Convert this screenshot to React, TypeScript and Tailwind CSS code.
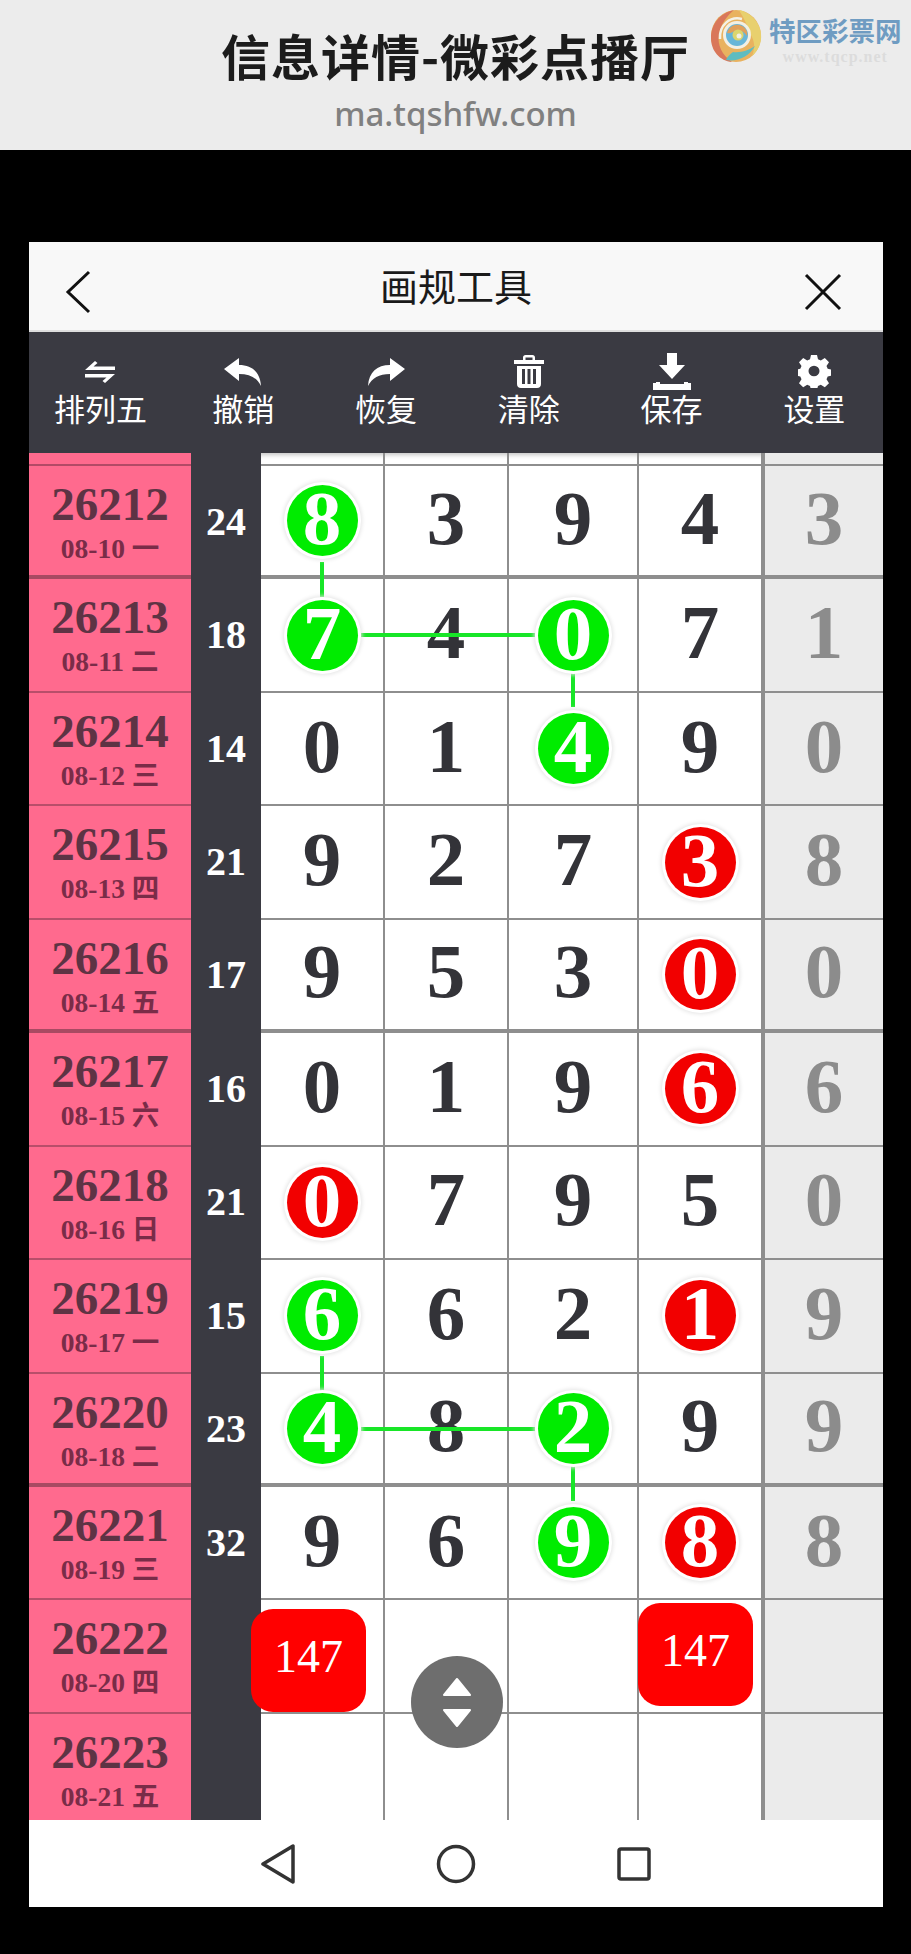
const SERIF = "font-['Liberation_Serif','Noto_Sans_CJK_SC',serif]";
const SANS = "font-['Noto_Sans_CJK_SC','Noto_Sans',sans-serif]";

type Mark = "green" | "red" | null;

type Row = {
  issue: string;
  date: string;
  sum: string;
  nums: [string, string, string, string];
  last: string;
  marks?: Mark[];
};

const rows: Row[] = [
  { issue: "26212", date: "08-10 一", sum: "24", nums: ["8", "3", "9", "4"], last: "3", marks: ["green", null, null, null] },
  { issue: "26213", date: "08-11 二", sum: "18", nums: ["7", "4", "0", "7"], last: "1", marks: ["green", null, "green", null] },
  { issue: "26214", date: "08-12 三", sum: "14", nums: ["0", "1", "4", "9"], last: "0", marks: [null, null, "green", null] },
  { issue: "26215", date: "08-13 四", sum: "21", nums: ["9", "2", "7", "3"], last: "8", marks: [null, null, null, "red"] },
  { issue: "26216", date: "08-14 五", sum: "17", nums: ["9", "5", "3", "0"], last: "0", marks: [null, null, null, "red"] },
  { issue: "26217", date: "08-15 六", sum: "16", nums: ["0", "1", "9", "6"], last: "6", marks: [null, null, null, "red"] },
  { issue: "26218", date: "08-16 日", sum: "21", nums: ["0", "7", "9", "5"], last: "0", marks: ["red", null, null, null] },
  { issue: "26219", date: "08-17 一", sum: "15", nums: ["6", "6", "2", "1"], last: "9", marks: ["green", null, null, "red"] },
  { issue: "26220", date: "08-18 二", sum: "23", nums: ["4", "8", "2", "9"], last: "9", marks: ["green", null, "green", null] },
  { issue: "26221", date: "08-19 三", sum: "32", nums: ["9", "6", "9", "8"], last: "8", marks: [null, null, "green", "red"] },
  { issue: "26222", date: "08-20 四", sum: "", nums: ["", "", "", ""], last: "" },
  { issue: "26223", date: "08-21 五", sum: "", nums: ["", "", "", ""], last: "" },
];

// rows that end with the heavier separator
const heavy = [0, 4, 8];

function Swirl() {
  return (
    <svg width="52" height="54" viewBox="0 0 52 54" fill="none" className="shrink-0">
      <ellipse cx="26" cy="27" rx="25" ry="26" fill="#e9b25f" />
      <path d="M24 1C10 4 1 15 1 29c0 13 9 23 21 24C12 46 7 36 9 25 11 14 18 6 24 1Z" fill="#d9775a" />
      <path d="M29 1c11 2 21 12 22 24 1 9-3 17-9 22 3-7 3-14-1-21C37 15 33 8 29 1Z" fill="#e8d06e" />
      <path d="M16 51c11 2 23-3 29-14-6 4-14 7-22 6-3 2-6 5-7 8Z" fill="#5fbcc0" />
      <path d="M10 30C9 16 20 7 32 10" stroke="#f4f1e6" strokeWidth="2.5" />
      <circle cx="27" cy="26" r="14" fill="#f2efe4" />
      <circle cx="27" cy="26" r="11" fill="#68b6d8" />
      <path d="M17 24c2-7 9-10 15-7 4 2 6 6 5 10-3-5-8-7-12-5-3 1-5 3-8 2Z" fill="#e0a05c" />
      <circle cx="28" cy="26" r="5.5" fill="#dcd56e" />
      <circle cx="29" cy="27" r="2.5" fill="#f2efe4" />
    </svg>
  );
}

function SwapIcon() {
  return (
    <svg width="32" height="24" viewBox="0 0 32 24" fill="white">
      <path d="M1 10 11 1l2.5 2L9.5 6.5H31V10Z" />
      <path d="M31 14 21 23l-2.500-2 4-3.500H1V14Z" />
    </svg>
  );
}

function ReplyIcon({ flip }: { flip?: boolean }) {
  return (
    <svg width="38" height="28" viewBox="0 0 38 28" fill="white" className={flip ? "-scale-x-100" : ""}>
      <path d="M0 11 15 0v7c13 0 21 7 22 21-4-8-11-12-22-12v7Z" />
    </svg>
  );
}

function TrashIcon() {
  return (
    <svg width="30" height="33" viewBox="0 0 30 33" fill="white">
      <path d="M9 5V2.500C9 1 10 0 11.500 0h7C20 0 21 1 21 2.500V5h9v4H0V5Zm2.500 0h7V2.500h-7Z" />
      <path fillRule="evenodd" d="M3 11h24v18c0 2.500-1.500 4-4 4H7c-2.500 0-4-1.500-4-4ZM8 14v15h3V14Zm5.500 0v15h3V14ZM19 14v15h3V14Z" />
    </svg>
  );
}

function SaveIcon() {
  return (
    <svg width="38" height="37" viewBox="0 0 38 37" fill="white">
      <path d="M14 0h10v12h8L19 26 6 12h8Z" />
      <path d="M0 30h3v-1h4v2h24v-2h4v1h3v7H0Z" />
    </svg>
  );
}

function GearIcon() {
  return (
    <svg width="33" height="33" viewBox="0 0 33 33" fill="white">
      <path
        fillRule="evenodd"
        d="M13.500 0h6l1 4.500 2.800 1.200 4-2.500 4.200 4.200-2.500 4 1.200 2.800 4.300 1v6l-4.300 1-1.200 2.800 2.500 4-4.200 4.200-4-2.500-2.800 1.200-1 4.100h-6l-1-4.100-2.800-1.200-4 2.500-4.200-4.200 2.500-4-1.200-2.800-4.300-1v-6l4.300-1 1.200-2.800-2.500-4 4.200-4.200 4 2.500 2.800-1.200ZM16.500 11a5.500 5.500 0 1 0 0 11 5.500 5.500 0 0 0 0-11Z"
        transform="translate(-0.5 0) scale(1 0.97)"
      />
    </svg>
  );
}

const tools = [
  { label: "排列五", icon: <SwapIcon /> },
  { label: "撤销", icon: <ReplyIcon /> },
  { label: "恢复", icon: <ReplyIcon flip /> },
  { label: "清除", icon: <TrashIcon /> },
  { label: "保存", icon: <SaveIcon /> },
  { label: "设置", icon: <GearIcon /> },
];

function Digit({ value, mark, muted }: { value: string; mark?: Mark; muted?: boolean }) {
  if (mark) {
    return (
      <span className={`z-10 flex h-[71px] w-[71px] items-center justify-center rounded-full text-white shadow-[0_0_0_3px_#fff,0_0_4px_4px_#e4e4e4] ${mark === "green" ? "bg-[#00ec00]" : "bg-[#f20000]"}`}>
        <span className="pb-[4px]">{value}</span>
      </span>
    );
  }
  return <span className={`pb-[5px] ${muted ? "text-[#8c8c8c]" : "text-[#333338]"}`}>{value}</span>;
}

const cols = "grid grid-cols-[124px_124px_130px_126px_118px]";

export default function App() {
  return (
    <div className="h-[1954px] w-[911px] overflow-hidden bg-black">
      <header className={`relative h-[150px] bg-[#ececec] text-center ${SANS}`}>
        <h1 className="pt-[20px] text-[49px] leading-[70px] font-bold tracking-[1px] text-[#1c1c1c]">信息详情-微彩点播厅</h1>
        <p className="pt-[2px] text-[33px] leading-[44px] font-['Noto_Sans',sans-serif] font-medium text-[#808080]">ma.tqshfw.com</p>
        <div className="absolute top-[9px] left-[710px] flex gap-[7px]">
          <Swirl />
          <div>
            <div className="mt-[5px] text-[26.500px] leading-[32px] font-bold text-[#6f9cc2]">特区彩票网</div>
            <div className="mt-[3px] font-['Liberation_Serif',serif] text-[16px] leading-[16px] tracking-[1px] font-bold text-[#dcdcdc]">www.tqcp.net</div>
          </div>
        </div>
      </header>

      <main className={`relative mx-[29px] mt-[92px] w-[854px] ${SANS}`}>
        <div className="relative flex h-[90px] items-center justify-center border-b-2 border-[#dedede] bg-[#f8f8f8] pb-[3px]">
          <svg width="26" height="44" viewBox="0 0 26 44" fill="none" stroke="#111" strokeWidth="3" className="absolute top-[28px] left-[36px]">
            <path d="M24 2 3 22l21 20" />
          </svg>
          <span className="text-[38px] leading-none text-[#1a1a1a]">画规工具</span>
          <svg width="38" height="38" viewBox="0 0 38 38" fill="none" stroke="#111" strokeWidth="3" className="absolute top-[31px] right-[41px]">
            <path d="M2 2l34 34M36 2 2 36" />
          </svg>
        </div>

        <div className="grid h-[121px] grid-cols-[repeat(6,142.800px)] bg-[#3a3a42] text-white">
          {tools.map((t) => (
            <div key={t.label} className="flex flex-col items-center pt-[23px]">
              <div className="flex h-[33px] items-center justify-center">{t.icon}</div>
              <div className="text-[31px] leading-[40px]">{t.label}</div>
            </div>
          ))}
        </div>

        <div className={`relative flex h-[1367px] overflow-hidden ${SERIF}`}>
          <div className="w-[162px] shrink-0 bg-[#ff6a8e]">
            <div className="h-[13px] border-b-2 border-[#b34a66]" />
            {rows.map((r, i) => (
              <div key={r.issue} className={`flex h-[113.450px] flex-col items-center font-bold ${heavy.includes(i) ? "border-b-4 border-[#a84a62]" : "border-b-2 border-[#b84e6a]"}`}>
                <div className="mt-[15px] text-[47px] leading-[46px] text-[#5e3344]">{r.issue}</div>
                <div className="mt-[6px] text-[27.500px] leading-[32px] text-[#7a2c48]">{r.date}</div>
              </div>
            ))}
          </div>

          <div className="w-[70px] shrink-0 bg-[#3a3a42] pt-[13px] text-center text-[40px] font-bold text-white">
            {rows.map((r) => (
              <div key={r.issue} className="flex h-[113.450px] items-center justify-center pb-[2px]">{r.sum}</div>
            ))}
          </div>

          <div className="relative w-[622px] shrink-0 bg-white">
            <div className={`${cols} h-[13px] border-b-2 border-[#8e8e8e] shadow-[inset_0_5px_4px_-3px_#c4c4c4]`}>
              <div className="border-r-2 border-[#8e8e8e]" />
              <div className="border-r-2 border-[#8e8e8e]" />
              <div className="border-r-2 border-[#8e8e8e]" />
              <div className="border-r-4 border-[#8e8e8e]" />
              <div className="bg-[#ebebeb]" />
            </div>
            {rows.map((r, i) => (
              <div key={r.issue} className={`${cols} h-[113.450px] text-[77px] leading-none font-bold ${heavy.includes(i) ? "border-b-4 border-[#8e8e8e]" : "border-b-2 border-[#8e8e8e]"}`}>
                {r.nums.map((n, c) => (
                  <div key={c} className={`flex items-center justify-center ${c === 3 ? "border-r-4" : "border-r-2"} border-[#8e8e8e]`}>
                    <Digit value={n} mark={r.marks?.[c]} />
                  </div>
                ))}
                <div className="flex items-center justify-center bg-[#ebebeb]">
                  <Digit value={r.last} muted />
                </div>
              </div>
            ))}

            {/* lines that join the marked numbers */}
            <svg width="622" height="1367" fill="none" stroke="#18e628" strokeWidth="4" className="absolute top-0 left-0">
              <path d="M61 109v35M100 182h174M312 219v35" />
              <path d="M61 903v35M100 976h174M312 1013v35" />
            </svg>

            <div className="absolute top-[1156px] left-[-10px] flex h-[103px] w-[115px] items-center justify-center rounded-[22px] bg-[#ff0000] pb-[8px] text-[46px] font-normal text-white">147</div>
            <div className="absolute top-[1150px] left-[377px] flex h-[103px] w-[115px] items-center justify-center rounded-[22px] bg-[#ff0000] pb-[8px] text-[46px] font-normal text-white">147</div>
            <div className="absolute top-[1203px] left-[150px] flex h-[92px] w-[92px] flex-col items-center justify-center gap-[13px] rounded-full bg-[#6e6e6e]">
              <svg width="28" height="19" viewBox="0 0 28 19" fill="white" stroke="white" strokeWidth="2" strokeLinejoin="round"><path d="M14 2 27 18H1Z" /></svg>
              <svg width="28" height="19" viewBox="0 0 28 19" fill="white" stroke="white" strokeWidth="2" strokeLinejoin="round"><path d="M14 17 27 1H1Z" /></svg>
            </div>
          </div>
        </div>

        <div className="flex h-[87px] items-center justify-center bg-white">
          <svg width="36" height="40" viewBox="0 0 36 40" fill="none" stroke="#333" strokeWidth="3.500" strokeLinejoin="round" className="mr-[140px]"><path d="M33 2v36L3 20Z" /></svg>
          <svg width="40" height="40" viewBox="0 0 40 40" fill="none" stroke="#333" strokeWidth="3.500"><circle cx="20" cy="20" r="17.500" /></svg>
          <svg width="36" height="36" viewBox="0 0 36 36" fill="none" stroke="#333" strokeWidth="3.500" strokeLinejoin="round" className="ml-[140px]"><rect x="3" y="3" width="30" height="30" rx="2" /></svg>
        </div>
      </main>
    </div>
  );
}
